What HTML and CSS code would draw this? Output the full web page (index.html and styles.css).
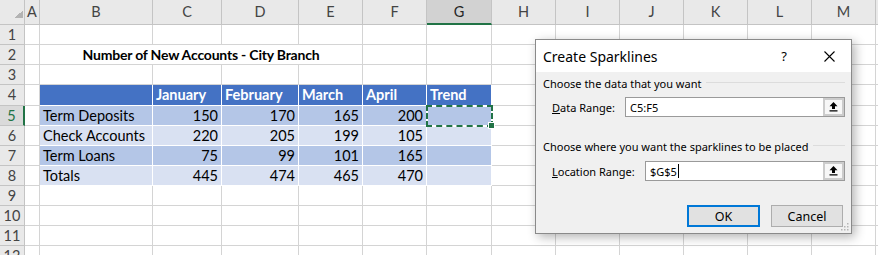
FILE: index.html
```html
<!DOCTYPE html>
<html>
<head>
    <title>Create Sparklines</title>
    <link rel="stylesheet" href="styles.css">
</head>
<body>
    <div class="sheet">
        <!-- column headers -->
        <div class="corner"><span class="tri"></span></div>
        <div class="ch">A</div><div class="ch">B</div><div class="ch">C</div><div class="ch">D</div>
        <div class="ch">E</div><div class="ch">F</div><div class="ch ch-sel">G</div><div class="ch">H</div>
        <div class="ch">I</div><div class="ch">J</div><div class="ch">K</div><div class="ch">L</div>
        <div class="ch">M</div><div class="ch"></div>

        <!-- row 1 -->
        <div class="rh">1</div>
        <div></div><div></div><div></div><div></div><div></div><div></div><div></div>
        <div></div><div></div><div></div><div></div><div></div><div></div><div></div>

        <!-- row 2 -->
        <div class="rh">2</div>
        <div></div>
        <div class="title">Number of New Accounts - City Branch</div>
        <div></div><div></div><div></div><div></div><div></div><div></div><div></div><div></div><div></div>

        <!-- row 3 -->
        <div class="rh">3</div>
        <div></div><div></div><div></div><div></div><div></div><div></div><div></div>
        <div></div><div></div><div></div><div></div><div></div><div></div><div></div>

        <!-- row 4 : table header -->
        <div class="rh">4</div>
        <div></div>
        <div class="th"></div><div class="th">January</div><div class="th">February</div>
        <div class="th">March</div><div class="th">April</div><div class="th">Trend</div>
        <div></div><div></div><div></div><div></div><div></div><div></div><div></div>

        <!-- row 5 -->
        <div class="rh rh-sel">5</div>
        <div></div>
        <div class="band1">Term Deposits</div><div class="band1 num">150</div><div class="band1 num">170</div>
        <div class="band1 num">165</div><div class="band1 num">200</div><div class="band1 sel"></div>
        <div></div><div></div><div></div><div></div><div></div><div></div><div></div>

        <!-- row 6 -->
        <div class="rh">6</div>
        <div></div>
        <div class="band2">Check Accounts</div><div class="band2 num">220</div><div class="band2 num">205</div>
        <div class="band2 num">199</div><div class="band2 num">105</div><div class="band2"></div>
        <div></div><div></div><div></div><div></div><div></div><div></div><div></div>

        <!-- row 7 -->
        <div class="rh">7</div>
        <div></div>
        <div class="band1">Term Loans</div><div class="band1 num">75</div><div class="band1 num">99</div>
        <div class="band1 num">101</div><div class="band1 num">165</div><div class="band1"></div>
        <div></div><div></div><div></div><div></div><div></div><div></div><div></div>

        <!-- row 8 -->
        <div class="rh">8</div>
        <div></div>
        <div class="band2">Totals</div><div class="band2 num">445</div><div class="band2 num">474</div>
        <div class="band2 num">465</div><div class="band2 num">470</div><div class="band2"></div>
        <div></div><div></div><div></div><div></div><div></div><div></div><div></div>

        <!-- rows 9 - 12 -->
        <div class="rh">9</div>
        <div></div><div></div><div></div><div></div><div></div><div></div><div></div>
        <div></div><div></div><div></div><div></div><div></div><div></div><div></div>
        <div class="rh">10</div>
        <div></div><div></div><div></div><div></div><div></div><div></div><div></div>
        <div></div><div></div><div></div><div></div><div></div><div></div><div></div>
        <div class="rh">11</div>
        <div></div><div></div><div></div><div></div><div></div><div></div><div></div>
        <div></div><div></div><div></div><div></div><div></div><div></div><div></div>
        <div class="rh">12</div>
        <div></div><div></div><div></div><div></div><div></div><div></div><div></div>
        <div></div><div></div><div></div><div></div><div></div><div></div><div></div>
    </div>

    <div class="dialog">
        <div class="dlg-head">
            <span class="dlg-title">Create Sparklines</span>
            <span class="dlg-help">?</span>
            <span class="dlg-close">
                <svg width="11" height="11" viewBox="0 0 11 11"><path d="M0.5 0.5 L10.5 10.5 M10.5 0.5 L0.5 10.5" stroke="#000" stroke-width="1.1" fill="none"/></svg>
            </span>
        </div>
        <div class="dlg-body">
            <div class="group"><span>Choose the data that you want</span><span class="rule"></span></div>
            <div class="field">
                <label><u>D</u>ata Range:</label>
                <div class="ref-box data">
                    <span class="ref-val">C5:F5</span>
                    <span class="ref-btn">
                        <svg width="9" height="10" viewBox="0 0 9 10"><path d="M4.5 0 L8.5 4.2 H6 V7 H3 V4.2 H0.5 Z M0.5 8.2 H8.5 V9.6 H0.5 Z" fill="#000"/></svg>
                    </span>
                </div>
            </div>
            <div class="group group-2"><span>Choose where you want the sparklines to be placed</span><span class="rule"></span></div>
            <div class="field field-2">
                <label><u>L</u>ocation Range:</label>
                <div class="ref-box loc">
                    <span class="ref-val">$G$5<span class="caret"></span></span>
                    <span class="ref-btn">
                        <svg width="9" height="10" viewBox="0 0 9 10"><path d="M4.5 0 L8.5 4.2 H6 V7 H3 V4.2 H0.5 Z M0.5 8.2 H8.5 V9.6 H0.5 Z" fill="#000"/></svg>
                    </span>
                </div>
            </div>
            <div class="actions">
                <button class="btn btn-ok">OK</button>
                <button class="btn">Cancel</button>
            </div>
        </div>
        <svg class="grip" width="8" height="8" viewBox="0 0 8 8">
            <rect x="6" y="0" width="1.5" height="1.5" fill="#b5b5b5"/>
            <rect x="3" y="3" width="1.5" height="1.5" fill="#b5b5b5"/>
            <rect x="6" y="3" width="1.5" height="1.5" fill="#b5b5b5"/>
            <rect x="0" y="6" width="1.5" height="1.5" fill="#b5b5b5"/>
            <rect x="3" y="6" width="1.5" height="1.5" fill="#b5b5b5"/>
            <rect x="6" y="6" width="1.5" height="1.5" fill="#b5b5b5"/>
        </svg>
    </div>
</body>
</html>
```

FILE: styles.css
```css
body {
    margin: 0;
    width: 878px;
    height: 255px;
    overflow: hidden;
    position: relative;
    background: #fff;
    font-family: Lato, "Liberation Sans", sans-serif;
}

/* Worksheet grid */
.sheet {
    display: grid;
    grid-template-columns: 25px 15px 113px 69px 77px 64px 64px 65px repeat(7, 64px);
    grid-template-rows: 25px repeat(3, 20px) 21px repeat(8, 20px);
}
.sheet > div {
    box-sizing: border-box;
    border-right: 1px solid #d4d4d4;
    border-bottom: 1px solid #d4d4d4;
    font-size: 14.5px;
    line-height: 19px;
    padding: 0 3px;
    white-space: nowrap;
    color: #000;
}

/* Headers */
.sheet > .corner,
.sheet > .ch,
.sheet > .rh {
    background: #e9e9e9;
    border-color: #c4c4c4;
    color: #444;
    text-align: center;
    padding: 0;
}
.sheet > .ch {
    line-height: 24px;
}
.sheet > .corner {
    display: flex;
    align-items: flex-end;
    justify-content: flex-end;
    padding: 0 1px 6px 0;
}
.tri {
    width: 8px;
    height: 8px;
    background: linear-gradient(to bottom right, transparent 50%, #b3b3b3 50%);
}
.sheet > .ch-sel {
    background: #d2d2d2;
    border-bottom: 2px solid #217346;
    color: #262626;
}
.sheet > .rh-sel {
    background: #dadada;
    border-right: 2px solid #217346;
    color: #217346;
}

/* Report table */
.sheet > .title {
    grid-column: span 4;
    font-size: 14px;
    letter-spacing: -0.2px;
    font-weight: bold;
    text-align: center;
}
.sheet > .th {
    background: #4472c4;
    color: #fff;
    font-weight: bold;
    border-color: #fff;
}
.sheet > .band1 {
    background: #b4c6e7;
    border-color: #fff;
}
.sheet > .band2 {
    background: #d9e1f2;
    border-color: #fff;
}
.sheet > .num {
    text-align: right;
}
.sheet > .sel {
    position: relative;
    z-index: 1;
    margin: -1px -1px -1px -1px;
    border: 2px dashed #217346;
    background: linear-gradient(#b4c6e7, #b4c6e7) padding-box, #fff border-box;
}
.sel::after {
    content: "";
    position: absolute;
    right: -4px;
    bottom: -4px;
    width: 5px;
    height: 5px;
    background: #217346;
    border: 1px solid #fff;
}

/* Create Sparklines dialog */
.dialog {
    position: absolute;
    left: 535px;
    top: 39px;
    width: 317px;
    height: 195px;
    box-sizing: border-box;
    border: 1px solid #8a8a8a;
    background: #f0f0f0;
    box-shadow: 3px 3px 10px rgba(0,0,0,0.3);
    font-family: "Noto Sans", "Open Sans", sans-serif;
    font-size: 11px;
    color: #000;
}
.dlg-head {
    height: 32px;
    background: #fff;
    display: flex;
    align-items: center;
    padding: 0 13px 0 7px;
}
.dlg-title {
    flex: 1;
    font-size: 14px;
}
.dlg-help {
    width: 14px;
    margin-right: 29px;
    text-align: center;
    font-size: 13px;
}
.dlg-close {
    width: 18px;
    display: flex;
    justify-content: center;
}
.dlg-body {
    padding: 0 6px 0 7px;
}
.group {
    display: flex;
    align-items: center;
    height: 16px;
    line-height: 16px;
    margin-top: 4px;
    white-space: nowrap;
}
.group-2 {
    margin-top: 22px;
}
.rule {
    flex: 1;
    height: 1px;
    background: #dcdcdc;
    margin: -3px 0 0 5px;
}
.field {
    display: flex;
    align-items: center;
    justify-content: space-between;
    padding-left: 9px;
    margin-top: 5px;
}
.field-2 {
    margin-top: 6px;
}
.ref-box {
    height: 20px;
    box-sizing: border-box;
    border: 1px solid #9a9a9a;
    background: #fff;
    display: flex;
    align-items: center;
}
.ref-box.data {
    width: 220px;
}
.ref-box.loc {
    width: 200px;
}
.ref-val {
    flex: 1;
    padding-left: 4px;
    display: flex;
    align-items: center;
}
.caret {
    width: 1px;
    height: 14px;
    background: #000;
    margin-left: 1px;
}
.ref-btn {
    width: 21px;
    height: 18px;
    box-sizing: border-box;
    border: 2px solid #cccccc;
    background: #f7f7f7;
    display: flex;
    align-items: center;
    justify-content: center;
}
.actions {
    display: flex;
    justify-content: flex-end;
    gap: 11px;
    margin-top: 24px;
    padding-right: 2px;
}
.btn {
    width: 72px;
    height: 22px;
    box-sizing: border-box;
    border: 1px solid #adadad;
    background: #e1e1e1;
    font-family: inherit;
    font-size: 12.5px;
    padding: 0;
    color: #000;
}
.btn-ok {
    width: 73px;
    border: 2px solid #0078d7;
}
.grip {
    position: absolute;
    right: 2px;
    bottom: 2px;
}
```
